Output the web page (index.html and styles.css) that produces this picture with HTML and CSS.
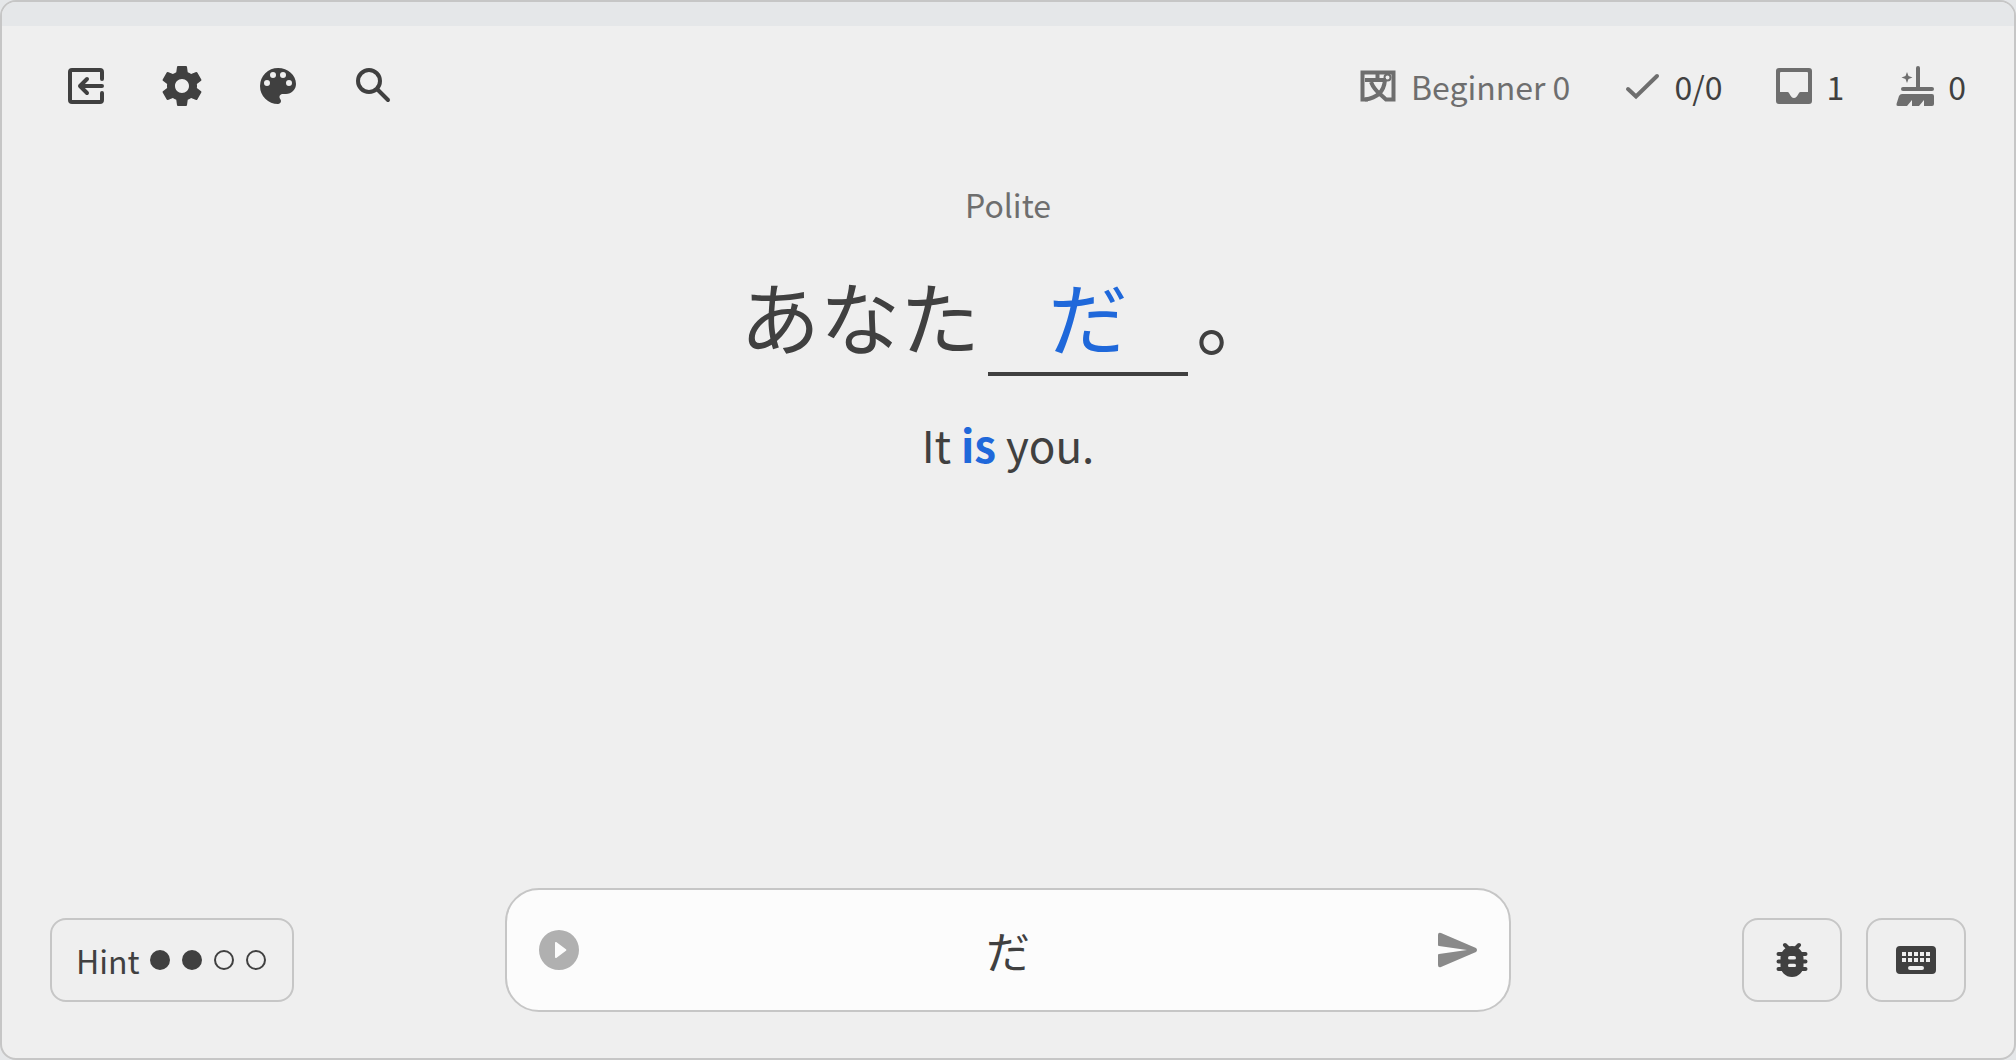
FILE: index.html
```html
<!DOCTYPE html>
<html lang="en">
<head>
<meta charset="utf-8">
<title>Practice</title>
<link rel="stylesheet" href="styles.css">
</head>
<body>
<div class="window">
  <div class="progress"></div>
  <header class="toolbar">
    <nav class="actions" aria-label="Tools">
      <button class="icon-button" type="button" aria-label="Exit">
        <svg class="icon" viewBox="0 0 48 48" aria-hidden="true">
          <path d="M40 17V10a2 2 0 0 0-2-2H10a2 2 0 0 0-2 2v28a2 2 0 0 0 2 2h28a2 2 0 0 0 2-2v-7M40 24H18M25 17l-7 7 7 7" fill="none" stroke="currentColor" stroke-width="4" stroke-linecap="round" stroke-linejoin="round"/>
        </svg>
      </button>
      <button class="icon-button" type="button" aria-label="Settings">
        <svg class="icon" viewBox="0 0 24 24" aria-hidden="true">
          <path fill="currentColor" d="M19.43 12.98c.04-.32.07-.64.07-.98s-.03-.66-.07-.98l2.11-1.65c.19-.15.24-.42.12-.64l-2-3.46c-.12-.22-.39-.3-.61-.22l-2.49 1c-.52-.4-1.080-.73-1.690-.98l-.38-2.650C14.460 2.180 14.250 2 14 2h-4c-.25 0-.46.18-.49.42l-.38 2.650c-.61.25-1.170.59-1.690.98l-2.490-1c-.23-.09-.49 0-.61.22l-2 3.460c-.13.22-.07.49.12.64l2.110 1.650c-.04.32-.07.65-.07.98s.03.66.07.98l-2.110 1.650c-.19.15-.24.42-.12.64l2 3.460c.12.22.39.3.61.22l2.490-1c.52.4 1.080.73 1.690.98l.38 2.650c.03.24.24.42.49.42h4c.25 0 .46-.18.49-.42l.38-2.650c.61-.25 1.170-.59 1.690-.98l2.490 1c.23.09.49 0 .61-.22l2-3.460c.12-.22.07-.49-.12-.64l-2.110-1.650zM12 15.500c-1.930 0-3.500-1.570-3.500-3.500s1.570-3.500 3.500-3.500 3.500 1.570 3.500 3.500-1.570 3.500-3.500 3.500z"/>
        </svg>
      </button>
      <button class="icon-button" type="button" aria-label="Theme">
        <svg class="icon" viewBox="0 0 24 24" aria-hidden="true">
          <path fill="currentColor" d="M12 3a9 9 0 0 0 0 18c.83 0 1.500-.67 1.500-1.500 0-.39-.15-.74-.39-1.010-.23-.26-.38-.61-.38-.99 0-.83.67-1.500 1.500-1.500H16c2.760 0 5-2.240 5-5 0-4.420-4.030-8-9-8zm-5.500 9a1.500 1.500 0 1 1 0-3 1.500 1.500 0 0 1 0 3zm3-4a1.500 1.500 0 1 1 0-3 1.500 1.500 0 0 1 0 3zm5 0a1.500 1.500 0 1 1 0-3 1.500 1.500 0 0 1 0 3zm3 4a1.500 1.500 0 1 1 0-3 1.500 1.500 0 0 1 0 3z"/>
        </svg>
      </button>
      <button class="icon-button" type="button" aria-label="Search">
        <svg class="icon" viewBox="0 0 48 48" aria-hidden="true">
          <g fill="none" stroke="currentColor" stroke-width="4" stroke-linecap="round"><circle cx="19" cy="19" r="11"/><path d="M28 28l10 10"/></g>
        </svg>
      </button>
    </nav>
    <div class="stats">
      <span class="stat muted">
        <svg class="icon" viewBox="0 0 40 40" aria-hidden="true">
          <g fill="none" stroke="currentColor" stroke-width="4"><path d="M1.500 33.500H9M3.500 34V6.500h31V34M36.500 33.500H27L21 28"/><path d="M6 14h21"/><path d="M12 16c2 5 5 9 10 13"/><path d="M26 14c-1 11-8 18-20 19.500"/><circle cx="28.500" cy="11.500" r="3" stroke-width="2"/><path d="M18.500 8v4"/></g>
        </svg>
        Beginner 0
      </span>
      <span class="stat">
        <svg class="icon" viewBox="0 0 40 40" aria-hidden="true"><path d="M6 23l8 7.500L35 10" fill="none" stroke="currentColor" stroke-width="4" stroke-linecap="round"/></svg>
        0/0
      </span>
      <span class="stat">
        <svg class="icon" viewBox="0 0 40 40" aria-hidden="true"><path fill="currentColor" fill-rule="evenodd" d="M5 2h30a3 3 0 0 1 3 3v30a3 3 0 0 1-3 3H5a3 3 0 0 1-3-3V5a3 3 0 0 1 3-3zm2 4a1 1 0 0 0-1 1v19h7.500c2.500 0 2.500 6 6.500 6s4-6 6.500-6H34V7a1 1 0 0 0-1-1z"/></svg>
        1
      </span>
      <span class="stat">
        <svg class="icon" viewBox="0 0 40 40" aria-hidden="true"><g fill="currentColor"><rect x="20" y="0" width="4" height="24" rx="2"/><rect x="5" y="21" width="33" height="4" rx="2"/><path d="M6 28h30a2 2 0 0 1 2 2v8a2 2 0 0 1-2 2h-8v-6l-5 6h-7v-6l-5 6H2q-2 0-1.500-2L3 30q1-2 3-2z"/><path d="M11 6l1.500 4 4 1.500-4 1.500-1.500 4-1.500-4-4-1.500 4-1.500z"/></g></svg>
        0
      </span>
    </div>
  </header>

  <main class="question">
    <p class="register">Polite</p>
    <p class="sentence" lang="ja">あなた<span class="blank">だ</span>。</p>
    <p class="translation">It <b>is</b> you.</p>
  </main>

  <footer class="bottom">
    <button class="outlined hint" type="button">Hint
      <span class="dots"><i class="dot full"></i><i class="dot full"></i><i class="dot"></i><i class="dot"></i></span>
    </button>
    <form class="answer">
      <button class="icon-button play" type="button" aria-label="Play">
        <svg class="icon" viewBox="0 0 24 24" aria-hidden="true"><path fill="currentColor" d="M12 2a10 10 0 1 0 0 20 10 10 0 0 0 0-20zm-2 13.500v-7c0-.41.47-.65.8-.4l4.670 3.500c.27.2.27.6 0 .8l-4.670 3.500c-.33.25-.8.01-.8-.4z"/></svg>
      </button>
      <input class="field" type="text" value="だ" aria-label="Answer" lang="ja">
      <button class="icon-button send" type="button" aria-label="Submit">
        <svg class="icon" viewBox="0 0 48 48" aria-hidden="true"><path fill="currentColor" d="M5 9q0-3 3-2l35 15q2 2 0 4L8 41q-3 1-3-2V29q0-1 1-1l28-4L6 20q-1 0-1-1z"/></svg>
      </button>
    </form>
    <div class="tools">
      <button class="outlined tool" type="button" aria-label="Report a problem">
        <svg class="icon" viewBox="0 0 40 40" aria-hidden="true"><g fill="none" stroke="currentColor" stroke-width="4" stroke-linecap="round"><path d="M13 5l4 4M27 5l-4 4M6.500 14h27M6.500 21.500h27M6.500 29h27"/></g><path fill="currentColor" fill-rule="evenodd" d="M20 6C26.500 6 31.500 12 31.500 18v8c0 6-5 11-11.500 11S8.500 32 8.500 26v-8C8.500 12 13.500 6 20 6zM18 16a2 2 0 0 0 0 4h4a2 2 0 0 0 0-4zm0 7.500a2 2 0 0 0 0 4h4a2 2 0 0 0 0-4z"/></svg>
      </button>
      <button class="outlined tool" type="button" aria-label="Keyboard">
        <svg class="icon" viewBox="0 0 40 40" aria-hidden="true"><path fill="currentColor" fill-rule="evenodd" d="M4 6h32a4 4 0 0 1 4 4v20a4 4 0 0 1-4 4H4a4 4 0 0 1-4-4V10a4 4 0 0 1 4-4zm2 6v4h4v-4zm6 0v4h4v-4zm6 0v4h4v-4zm6 0v4h4v-4zm6 0v4h4v-4zM6 18v4h4v-4zm6 0v4h4v-4zm6 0v4h4v-4zm6 0v4h4v-4zm6 0v4h4v-4zM14 26a2 2 0 0 0 0 4h12a2 2 0 0 0 0-4z"/></svg>
      </button>
    </div>
  </footer>
</div>
</body>
</html>
```
FILE: styles.css
```css
* {
  box-sizing: border-box;
}

body {
  margin: 0;
  background: #e5e7e9;
  color: #404040;
  font-family: "Noto Sans CJK JP", sans-serif;
  font-size: 32px;
  line-height: 48px;
}

button,
input {
  margin: 0;
  padding: 0;
  border: 0;
  background: none;
  color: inherit;
  font: inherit;
}

p {
  margin: 0;
}

.window {
  display: flex;
  flex-direction: column;
  min-height: 100vh;
  overflow: hidden;
  border: 2px solid #c6c6c6;
  border-radius: 16px;
  background: #efefef;
}

.progress {
  height: 24px;
  background: #e5e7e9;
}

.toolbar {
  display: flex;
  justify-content: space-between;
  align-items: center;
  padding: 36px 48px 0 60px;
}

.actions {
  display: flex;
  gap: 48px;
}

.icon-button,
.icon {
  display: block;
  flex: none;
}

.actions .icon,
.answer .icon {
  width: 48px;
  height: 48px;
}

.stats {
  display: flex;
  gap: 52px;
}

.stat {
  display: flex;
  align-items: center;
  gap: 12px;
}

.stat .icon {
  width: 40px;
  height: 40px;
  color: #6e6e6e;
}

.muted,
.register {
  color: #6e6e6e;
}

.question {
  flex: 1;
  padding-top: 70px;
  text-align: center;
}

.sentence {
  margin-top: 28px;
  font-size: 80px;
  line-height: 116px;
}

.blank {
  display: inline-block;
  width: 200px;
  margin: 0 8px;
  border-bottom: 4px solid #404040;
  color: #1f68da;
}

.translation {
  margin-top: 34px;
  font-size: 44px;
  line-height: 68px;
}

.translation b {
  color: #1f68da;
}

.bottom {
  display: grid;
  grid-template-columns: 1fr 2fr 1fr;
  align-items: end;
  padding-bottom: 46px;
}

.outlined {
  display: flex;
  align-items: center;
  justify-content: center;
  height: 84px;
  margin-bottom: 10px;
  border: 2px solid #c6c6c6;
  border-radius: 16px;
}

.hint {
  justify-self: start;
  gap: 10px;
  margin-left: 48px;
  padding: 0 26px 0 24px;
}

.dots {
  display: flex;
  gap: 12px;
}

.dot {
  width: 20px;
  height: 20px;
  border: 2px solid #404040;
  border-radius: 50%;
}

.full {
  background: #404040;
}

.answer {
  display: flex;
  align-items: center;
  height: 124px;
  padding: 0 28px;
  border: 2px solid #c6c6c6;
  border-radius: 34px;
  background: #fcfcfc;
}

.field {
  flex: 1;
  min-width: 0;
  height: 64px;
  font-size: 44px;
  text-align: center;
  outline: 0;
}

.play {
  color: #b0b0b0;
}

.send {
  color: #8a8a8a;
}

.tools {
  display: flex;
  justify-content: flex-end;
  gap: 24px;
  padding-right: 48px;
}

.tool {
  width: 100px;
}

.tool .icon {
  width: 40px;
  height: 40px;
}
```
